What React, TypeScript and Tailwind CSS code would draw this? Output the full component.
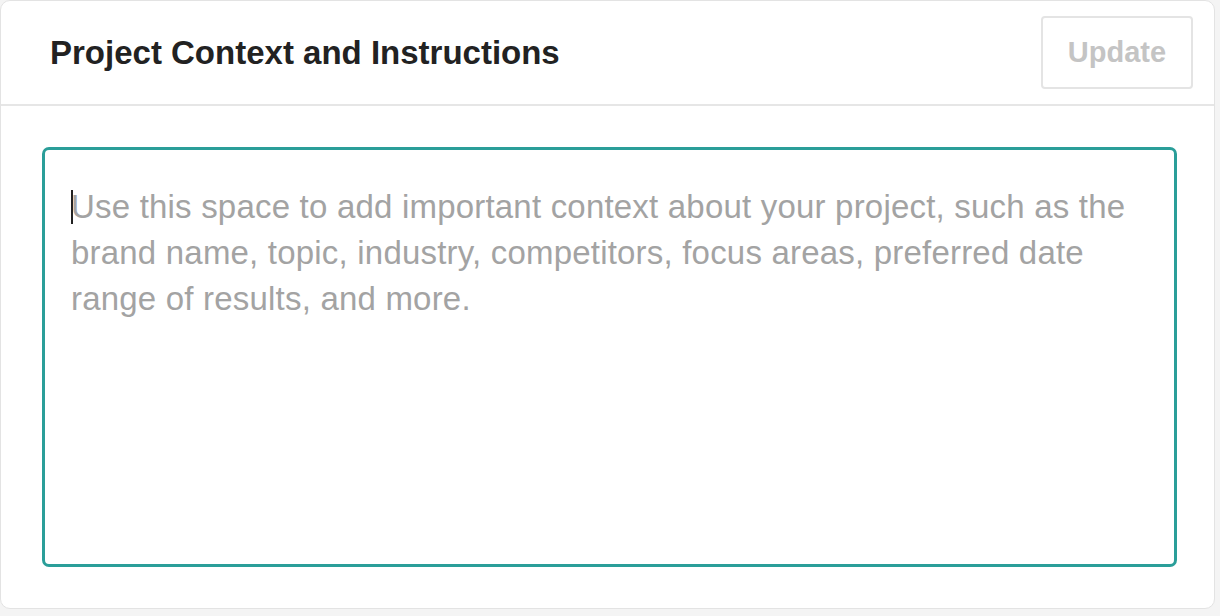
export default function App() {
  return (
    <div className="min-h-screen bg-[#f4f4f4]" style={{ fontFamily: '"Liberation Sans", Arial, sans-serif' }}>
      <div className="w-[1215px] h-[609px] bg-white border border-[#e3e3e3] rounded-[10px] flex flex-col">
        {/* Header */}
        <div className="h-[105px] shrink-0 border-b-2 border-[#e6e6e6] flex items-center justify-between pl-[49px] pr-[21px]">
          <h2 className="text-[33px] font-bold text-[#222222]">Project Context and Instructions</h2>
          <button className="w-[152px] h-[73px] border-2 border-[#e4e4e4] rounded-[4px] text-[29px] font-bold text-[#c4c4c4] bg-white">
            Update
          </button>
        </div>

        {/* Body */}
        <div className="flex-1 pt-[41px] pb-[41px] pl-[41px] pr-[37px] flex">
          <div className="relative flex-1 border-[3px] border-[#2a9e99] rounded-[7px] pt-[34px] pl-[26px] pr-[30px]">
            <span className="absolute left-[26px] top-[40px] w-[2px] h-[34px] bg-[#222222]" />
            <p className="text-[33px] leading-[46px] tracking-[0.2px] text-[#a3a3a3]">
              Use this space to add important context about your project, such as the brand name, topic, industry, competitors, focus areas, preferred date range of results, and more.
            </p>
          </div>
        </div>
      </div>
    </div>
  );
}
